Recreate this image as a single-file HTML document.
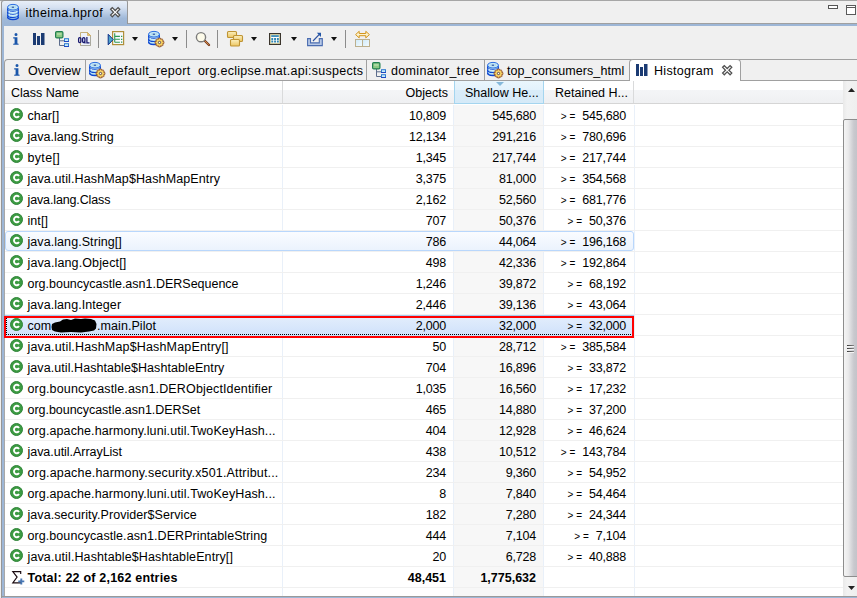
<!DOCTYPE html>
<html><head><meta charset="utf-8"><title>itheima.hprof</title>
<style>
*{box-sizing:border-box;margin:0;padding:0}
html,body{width:857px;height:598px;overflow:hidden;background:#f0f0f0}
body{font-family:"Liberation Sans",sans-serif;font-size:12.5px;color:#000;position:relative;letter-spacing:.07px}
.abs{position:absolute}
svg{position:absolute;overflow:visible}
#etab{left:1px;top:0;width:127px;height:24px;background:linear-gradient(#e8eff8 0,#d6e1f1 28%,#b6cae4 55%,#a0b9d9 75%,#9db6d6 100%);border:1px solid #979797;border-bottom:none;border-radius:3px 2px 0 0}
#etab span{position:absolute;left:23.500px;top:5px;white-space:nowrap;letter-spacing:.42px}
#itabs{left:4px;top:59px;width:853px;height:22px;border-top:1px solid #a0a0a0;border-bottom:1px solid #a0a0a0;border-left:1px solid #a0a0a0;border-radius:4px 0 0 0;background:#f0f0f0}
.it{position:absolute;top:0;height:20px;border-right:1px solid #a0a0a0;white-space:nowrap}
.it span{position:absolute;top:4px}
#table{left:5px;top:81px;width:838px;height:515px;background:#fff;overflow:hidden}
#hdr{left:0;top:0;width:838px;height:23px;background:linear-gradient(#fff 0,#fff 39%,#f4f5f7 40%,#eff0f2 100%);border-bottom:1px solid #d5d5d5}
.hc{position:absolute;top:0;height:22px;border-right:1px solid #d9dadb;white-space:nowrap}
.hc span{position:absolute;top:5px;letter-spacing:0}
.row{position:absolute;left:5px;width:838px;height:21px;border-bottom:1px solid #f0f0f0;white-space:nowrap}
.row span{position:absolute;top:4px}
.nm{left:22.500px}
.c1{right:397px;letter-spacing:-.2px}.c2{right:307px;letter-spacing:-.2px}.c3{right:217px;letter-spacing:-.2px}
.ge{position:static!important;font-size:10px;letter-spacing:3px!important;margin-right:.5px}
.ci{left:5px;top:3px}
.vl{position:absolute;top:105px;width:1px;height:491px;background:#e9f0f9}
.hov:before{content:"";box-sizing:border-box;position:absolute;left:0;top:0;width:629px;height:20px;border:1px solid #b9d7fc;border-radius:3px;background:linear-gradient(#fafcff,#ebf3fd)}
.sel:before{content:"";box-sizing:border-box;position:absolute;left:0;top:0;width:629px;height:21px;border-top:1px solid #a8c8ee;background:linear-gradient(#e3eefc,#cfe1fb)}
.sel:after{content:"";box-sizing:border-box;position:absolute;left:1px;top:1px;width:627px;height:19px;border:1px dotted #000}
.blot{left:46px;top:3px}
.dd{position:absolute;top:11px;width:0;height:0;margin-left:.2px;border-left:3.700px solid transparent;border-right:3.700px solid transparent;border-top:4px solid #111}
.sep{position:absolute;top:4px;width:1px;height:18px;background:#8c8c8c}
</style></head><body>
<div class="abs" style="left:0;top:0;width:857px;height:1px;background:#a6a6a6"></div>
<div class="abs" style="left:1px;top:2px;width:1px;height:596px;background:#969696"></div>
<div class="abs" style="left:2px;top:24px;width:2px;height:574px;background:#9db6d6"></div>
<div class="abs" style="left:128px;top:23px;width:729px;height:1px;background:#a0a0a0"></div>
<div class="abs" style="left:2px;top:24px;width:855px;height:2px;background:#9db6d6"></div>
<div class="abs" id="etab">
<svg style="left:5px;top:3px" width="12" height="16" viewBox="0 0 12 16"><path d="M.6 3.200V13.0a5.400 2.500 0 0 0 10.800 0V3.200z" fill="#b9e3f2" stroke="#1d5cdc" stroke-width="1"/><path d="M.6 5.0a5.400 2.500 0 0 0 10.800 0" fill="none" stroke="#0f45cf" stroke-width="1.200"/><path d="M1.600 3.8a4.600 2.100 0 0 0 8.800 0" fill="none" stroke="#dff4fa" stroke-width=".9"/><path d="M.6 8.0a5.400 2.500 0 0 0 10.800 0" fill="none" stroke="#0f45cf" stroke-width="1.200"/><path d="M1.600 6.8a4.600 2.100 0 0 0 8.800 0" fill="none" stroke="#dff4fa" stroke-width=".9"/><path d="M.6 11.0a5.400 2.500 0 0 0 10.800 0" fill="none" stroke="#0f45cf" stroke-width="1.200"/><path d="M1.600 9.8a4.600 2.100 0 0 0 8.800 0" fill="none" stroke="#dff4fa" stroke-width=".9"/><path d="M.6 13.0a5.400 2.500 0 0 0 10.800 0" fill="none" stroke="#0f45cf" stroke-width="1.300"/><ellipse cx="6" cy="3.200" rx="5.400" ry="2.800" fill="#c9eaf5" stroke="#2367e0" stroke-width=".95"/><ellipse cx="6" cy="3.200" rx="3.400" ry="1.400" fill="#b3dcf0"/><rect x="4.800" y="2.700" width="2.200" height="1" fill="#1f3f96"/></svg>
<span>itheima.hprof</span>
<svg style="left:108px;top:6px" width="10.400" height="10.400" viewBox="0 0 10.400 10.400"><path d="M.6 2.300L2.300 .6 5.200 3.500 8.100 .6l1.700 1.700-2.900 2.900 2.900 2.900-1.700 1.700-2.900-2.900-2.900 2.900L.6 8.100l2.900-2.900z" fill="#fff" stroke="#505050" stroke-width="1.250" stroke-linejoin="miter"/></svg>
</div>
<div class="abs" style="left:828px;top:5px;width:10px;height:4px;border:1px solid #555;background:#fff"></div>
<div class="abs" style="left:846px;top:5px;width:10px;height:10px;border:1px solid #5a5a5a;background:#fff"></div><div class="abs" style="left:846px;top:7px;width:10px;height:1px;background:#5a5a5a"></div>
<div class="abs" id="tb" style="left:0;top:26px;width:857px;height:33px">
<svg style="left:12.500px;top:7px" width="6" height="12" viewBox="0 0 6 12"><path d="M1.500 1.500a1.500 1.500 0 1 1 3 0a1.500 1.500 0 1 1-3 0zM.2 4.300h4.200v6.200l1.200.2v1.100H.2v-1.100l1.400-.2V5.600L.2 5.400z" fill="#1a56aa"/></svg>
<svg style="left:33px;top:7px" width="12" height="13" viewBox="0 0 12 13"><path d="M0 0h3v12h-3zM4 3h3v9h-3zM8 0h3.500v12h-3.500z" fill="#1b3b73"/></svg>
<svg style="left:55px;top:5px" width="15" height="16" viewBox="0 0 15 16"><path d="M4.500 7v7.500h5M4.500 9.800h5" fill="none" stroke="#5d6d8c" stroke-width="1"/><rect x=".6" y=".6" width="7.300" height="6.300" rx="1.200" fill="#8cc983" stroke="#1f7f4f" stroke-width="1.200"/><rect x="2" y="2" width="4.500" height="2" fill="#a9d8a0"/><rect x="9.500" y="7.700" width="4" height="2.800" fill="#c8ecfa" stroke="#2e7bd0"/><rect x="9.500" y="12.700" width="4" height="2.800" fill="#c8ecfa" stroke="#2e7bd0"/><path d="M9 10.500h5M9 15.500h5" stroke="#2048c0" stroke-width="1"/></svg>
<svg style="left:77px;top:6px" width="15" height="14" viewBox="0 0 15 14"><path d="M3.500 .5h7l3 3v10h-10z" fill="#eef2fb" stroke="#c4b07c"/><path d="M3.500 13.500h10v-9" fill="none" stroke="#a9a9a0"/><path d="M10.500 .5v3h3z" fill="#e9c672" stroke="#c9a04a" stroke-width=".6"/><g fill="none" stroke="#17176f" stroke-width="1.250"><rect x="1.600" y="5.600" width="2.300" height="5" rx="1.100"/><rect x="5.600" y="5.600" width="2.300" height="5" rx="1.100"/><path d="M6.800 9.500l1.600 1.800M9.900 5v5.800h2.600"/></g></svg>
<div class="sep" style="left:98px"></div>
<svg style="left:107px;top:5px" width="18" height="15" viewBox="0 0 18 15"><rect x="5.600" y=".6" width="11" height="13" fill="#f6f9fd" stroke="#b08f3a" stroke-width="1.200"/><path d="M7.700 2.300v8.900M7.700 5.400h5.200M7.700 8.300h5.200M7.700 11.200h5.200" stroke="#2f9a55" stroke-width="1.100" fill="none"/><path d="M14 5.400h1.300M14 8.300h1.300M14 11.200h1.300" stroke="#2f9a55" stroke-width="1.200"/><path d="M1.200 3.300l5 5.200-5 5.300z" fill="#4ea5cc" stroke="#0b2f88" stroke-width="1" stroke-linejoin="round"/></svg>
<div class="dd" style="left:132px"></div>
<svg style="left:148px;top:5px" width="16" height="16" viewBox="0 0 16 16"><path d="M.6 3.200V11.0a5.400 2.500 0 0 0 10.800 0V3.200z" fill="#b9e3f2" stroke="#1d5cdc" stroke-width="1"/><path d="M.6 5.0a5.400 2.500 0 0 0 10.800 0" fill="none" stroke="#0f45cf" stroke-width="1.200"/><path d="M1.600 3.8a4.600 2.100 0 0 0 8.800 0" fill="none" stroke="#dff4fa" stroke-width=".9"/><path d="M.6 8.0a5.400 2.500 0 0 0 10.800 0" fill="none" stroke="#0f45cf" stroke-width="1.200"/><path d="M1.600 6.8a4.600 2.100 0 0 0 8.800 0" fill="none" stroke="#dff4fa" stroke-width=".9"/><path d="M.6 11.0a5.400 2.500 0 0 0 10.800 0" fill="none" stroke="#0f45cf" stroke-width="1.300"/><ellipse cx="6" cy="3.200" rx="5.400" ry="2.800" fill="#c9eaf5" stroke="#2367e0" stroke-width=".95"/><ellipse cx="6" cy="3.200" rx="3.400" ry="1.400" fill="#b3dcf0"/><rect x="4.800" y="2.700" width="2.200" height="1" fill="#1f3f96"/><g transform="translate(7,7)"><path d="M3.61 0.09L5.39 0.09L5.72 1.44L5.80 1.47L6.99 0.75L8.25 2.01L7.53 3.20L7.56 3.28L8.91 3.61L8.91 5.39L7.56 5.72L7.53 5.80L8.25 6.99L6.99 8.25L5.80 7.53L5.72 7.56L5.39 8.91L3.61 8.91L3.28 7.56L3.20 7.53L2.01 8.25L0.75 6.99L1.47 5.80L1.44 5.72L0.09 5.39L0.09 3.61L1.44 3.28L1.47 3.20L0.75 2.01L2.01 0.75L3.20 1.47L3.28 1.44z" fill="#fbd55c" stroke="#8f5030" stroke-width=".9" stroke-linejoin="round"/><circle cx="4.500" cy="4.500" r="1.900" fill="#fde9a0"/><circle cx="4.500" cy="4.500" r="1.200" fill="#fff" stroke="#4a3020" stroke-width=".9"/></g></svg>
<div class="dd" style="left:172px"></div>
<div class="sep" style="left:186px"></div>
<svg style="left:195px;top:5px" width="16" height="16" viewBox="0 0 16 16"><path d="M9.500 9.500l4.500 4.500" stroke="#7a3c1c" stroke-width="2.400" stroke-linecap="round"/><path d="M10 10l3.500 3.500" stroke="#d08a4a" stroke-width="1" stroke-linecap="round"/><circle cx="6" cy="6.200" r="4.600" fill="#fdfbea" stroke="#7c7c7c" stroke-width="1.400"/></svg>
<div class="sep" style="left:217px"></div>
<svg style="left:227px;top:5px" width="16" height="16" viewBox="0 0 16 16"><defs><linearGradient id="yg" x1="0" y1="0" x2="0" y2="1"><stop offset="0" stop-color="#fbf0c0"/><stop offset="1" stop-color="#ecc661"/></linearGradient></defs><g fill="url(#yg)" stroke="#bf9434" stroke-width="1.100"><rect x=".5" y=".5" width="9" height="6" rx="1"/><rect x="6.500" y="4.500" width="9" height="6" rx="1"/><rect x="3.500" y="8.500" width="9" height="6.500" rx="1"/></g></svg>
<div class="dd" style="left:251px"></div>
<svg style="left:269px;top:7px" width="12" height="12" viewBox="0 0 12 12"><rect x=".6" y=".6" width="10.800" height="10.800" fill="#fff" stroke="#3a342c" stroke-width="1.200"/><rect x="1.600" y="1.600" width="8.800" height="8.800" fill="none" stroke="#cdc795" stroke-width=".9"/><rect x="2.200" y="2.200" width="7.600" height="1.700" fill="#2f86b2"/><path d="M2.300 6h7.500M2.300 8.500h7.500" stroke="#2f86b2" stroke-width="1.900" stroke-dasharray="1.900 .9"/></svg>
<div class="dd" style="left:291px"></div>
<svg style="left:307px;top:6px" width="17" height="15" viewBox="0 0 17 15"><path d="M.6 6.600h2.900v4.300h8.800V6.600h3v7H.6z" fill="#b7c8e6" stroke="#4a6cb0" stroke-width="1.100"/><path d="M6 9l6.800-7.200" stroke="#2a50a0" stroke-width="1.100"/><path d="M9.800 .7h4.200v4.200z" fill="#2456a6"/></svg>
<div class="dd" style="left:331px"></div>
<div class="sep" style="left:345px"></div>
<svg style="left:355px;top:5px" width="16" height="16" viewBox="0 0 16 16"><path d="M.6 3.600l3.600-3.300v2.200h6.600V.3l3.600 3.300-3.600 3.300V4.700H4.200v2.200z" fill="#fdf3cf" stroke="#d3961c" stroke-width="1"/><defs><linearGradient id="bg2" x1="0" y1="0" x2="1" y2="1"><stop offset="0" stop-color="#cfeaf8"/><stop offset="1" stop-color="#f4fbfe"/></linearGradient></defs><rect x=".5" y="8.500" width="7" height="7" fill="url(#bg2)" stroke="#bcb08e"/><rect x="7.500" y="8.500" width="7" height="7" fill="url(#bg2)" stroke="#bcb08e"/></svg>
</div>
<div class="abs" id="itabs">
<div class="it" style="left:0;width:81px"><svg style="left:8.500px;top:4px" width="6" height="12" viewBox="0 0 6 12"><path d="M1.500 1.500a1.500 1.500 0 1 1 3 0a1.500 1.500 0 1 1-3 0zM.2 4.300h4.200v6.200l1.200.2v1.100H.2v-1.100l1.400-.2V5.600L.2 5.400z" fill="#1a56aa"/></svg><span style="left:23px">Overview</span></div>
<div class="it" style="left:81px;width:281px"><svg style="left:3px;top:2px" width="16" height="16" viewBox="0 0 16 16"><path d="M.6 3.200V11.0a5.400 2.500 0 0 0 10.800 0V3.200z" fill="#b9e3f2" stroke="#1d5cdc" stroke-width="1"/><path d="M.6 5.0a5.400 2.500 0 0 0 10.800 0" fill="none" stroke="#0f45cf" stroke-width="1.200"/><path d="M1.600 3.8a4.600 2.100 0 0 0 8.800 0" fill="none" stroke="#dff4fa" stroke-width=".9"/><path d="M.6 8.0a5.400 2.500 0 0 0 10.800 0" fill="none" stroke="#0f45cf" stroke-width="1.200"/><path d="M1.600 6.8a4.600 2.100 0 0 0 8.800 0" fill="none" stroke="#dff4fa" stroke-width=".9"/><path d="M.6 11.0a5.400 2.500 0 0 0 10.800 0" fill="none" stroke="#0f45cf" stroke-width="1.300"/><ellipse cx="6" cy="3.200" rx="5.400" ry="2.800" fill="#c9eaf5" stroke="#2367e0" stroke-width=".95"/><ellipse cx="6" cy="3.200" rx="3.400" ry="1.400" fill="#b3dcf0"/><rect x="4.800" y="2.700" width="2.200" height="1" fill="#1f3f96"/><g transform="translate(7,7)"><path d="M3.61 0.09L5.39 0.09L5.72 1.44L5.80 1.47L6.99 0.75L8.25 2.01L7.53 3.20L7.56 3.28L8.91 3.61L8.91 5.39L7.56 5.72L7.53 5.80L8.25 6.99L6.99 8.25L5.80 7.53L5.72 7.56L5.39 8.91L3.61 8.91L3.28 7.56L3.20 7.53L2.01 8.25L0.75 6.99L1.47 5.80L1.44 5.72L0.09 5.39L0.09 3.61L1.44 3.28L1.47 3.20L0.75 2.01L2.01 0.75L3.20 1.47L3.28 1.44z" fill="#fbd55c" stroke="#8f5030" stroke-width=".9" stroke-linejoin="round"/><circle cx="4.500" cy="4.500" r="1.900" fill="#fde9a0"/><circle cx="4.500" cy="4.500" r="1.200" fill="#fff" stroke="#4a3020" stroke-width=".9"/></g></svg><span style="left:23.500px;letter-spacing:.27px">default_report&nbsp; org.eclipse.mat.api:suspects</span></div>
<div class="it" style="left:362px;width:118px"><svg style="left:5px;top:2px" width="15" height="16" viewBox="0 0 15 16"><path d="M4.500 7v7.500h5M4.500 9.800h5" fill="none" stroke="#5d6d8c" stroke-width="1"/><rect x=".6" y=".6" width="7.300" height="6.300" rx="1.200" fill="#8cc983" stroke="#1f7f4f" stroke-width="1.200"/><rect x="2" y="2" width="4.500" height="2" fill="#a9d8a0"/><rect x="9.500" y="7.700" width="4" height="2.800" fill="#c8ecfa" stroke="#2e7bd0"/><rect x="9.500" y="12.700" width="4" height="2.800" fill="#c8ecfa" stroke="#2e7bd0"/><path d="M9 10.500h5M9 15.500h5" stroke="#2048c0" stroke-width="1"/></svg><span style="left:24px;letter-spacing:.33px">dominator_tree</span></div>
<div class="it" style="left:480px;width:146px"><svg style="left:2px;top:2px" width="16" height="16" viewBox="0 0 16 16"><path d="M.6 3.200V11.0a5.400 2.500 0 0 0 10.800 0V3.200z" fill="#b9e3f2" stroke="#1d5cdc" stroke-width="1"/><path d="M.6 5.0a5.400 2.500 0 0 0 10.800 0" fill="none" stroke="#0f45cf" stroke-width="1.200"/><path d="M1.600 3.8a4.600 2.100 0 0 0 8.800 0" fill="none" stroke="#dff4fa" stroke-width=".9"/><path d="M.6 8.0a5.400 2.500 0 0 0 10.800 0" fill="none" stroke="#0f45cf" stroke-width="1.200"/><path d="M1.600 6.8a4.600 2.100 0 0 0 8.800 0" fill="none" stroke="#dff4fa" stroke-width=".9"/><path d="M.6 11.0a5.400 2.500 0 0 0 10.800 0" fill="none" stroke="#0f45cf" stroke-width="1.300"/><ellipse cx="6" cy="3.200" rx="5.400" ry="2.800" fill="#c9eaf5" stroke="#2367e0" stroke-width=".95"/><ellipse cx="6" cy="3.200" rx="3.400" ry="1.400" fill="#b3dcf0"/><rect x="4.800" y="2.700" width="2.200" height="1" fill="#1f3f96"/><g transform="translate(7,7)"><path d="M3.61 0.09L5.39 0.09L5.72 1.44L5.80 1.47L6.99 0.75L8.25 2.01L7.53 3.20L7.56 3.28L8.91 3.61L8.91 5.39L7.56 5.72L7.53 5.80L8.25 6.99L6.99 8.25L5.80 7.53L5.72 7.56L5.39 8.91L3.61 8.91L3.28 7.56L3.20 7.53L2.01 8.25L0.75 6.99L1.47 5.80L1.44 5.72L0.09 5.39L0.09 3.61L1.44 3.28L1.47 3.20L0.75 2.01L2.01 0.75L3.20 1.47L3.28 1.44z" fill="#fbd55c" stroke="#8f5030" stroke-width=".9" stroke-linejoin="round"/><circle cx="4.500" cy="4.500" r="1.900" fill="#fde9a0"/><circle cx="4.500" cy="4.500" r="1.200" fill="#fff" stroke="#4a3020" stroke-width=".9"/></g></svg><span style="left:22px">top_consumers_html</span></div>
<div class="it" style="left:624px;width:112px;height:22px;background:#fff;border-left:1px solid #a0a0a0;top:-1px;border-top:1px solid #a0a0a0;border-radius:4px 4px 0 0"><svg style="left:6px;top:4px" width="12" height="13" viewBox="0 0 12 13"><path d="M0 0h3v12h-3zM4 3h3v9h-3zM8 0h3.500v12h-3.500z" fill="#1b3b73"/></svg><span style="left:24px;top:4px;letter-spacing:.3px">Histogram</span>
<svg style="left:92px;top:5px" width="10.400" height="10.400" viewBox="0 0 10.400 10.400"><path d="M.6 2.300L2.300 .6 5.200 3.500 8.100 .6l1.700 1.700-2.900 2.900 2.900 2.900-1.700 1.700-2.900-2.900-2.900 2.900L.6 8.100l2.900-2.900z" fill="#fff" stroke="#505050" stroke-width="1.250" stroke-linejoin="miter"/></svg>
</div>
</div>
<div class="abs" style="left:4px;top:81px;width:1px;height:515px;background:#a8a8a8"></div>
<div class="abs" id="table">
<div class="abs" id="hdr">
<div class="hc" style="left:0;width:278px"><span style="left:6px">Class Name</span></div>
<div class="hc" style="left:278px;width:171px;border-right:none"><span style="right:6px">Objects</span></div>
<div class="hc" style="left:449px;width:90px;height:23px;background:linear-gradient(#eaf6fd 0,#e3f2fc 39%,#d9ecf9 40%,#d5eaf8 100%);border:1px solid #a4d5ef;border-top:none"><span style="left:10px;top:5px">Shallow He...</span><svg style="left:41px;top:1px" width="8" height="4" viewBox="0 0 8 4"><path d="M0 0h8l-4 4z" fill="#86b9db"/></svg></div>
<div class="hc" style="left:539px;width:90px"><span style="left:11px">Retained H...</span></div>
</div>
</div>
<div class="abs" style="left:454px;top:105px;width:89px;height:491px;background:#f7f7f7"></div>
<div class="vl" style="left:282px"></div><div class="vl" style="left:453px"></div><div class="vl" style="left:543px"></div><div class="vl" style="left:634px"></div>
<div class="row" style="top:105px"><svg class="ci" width="13" height="13" viewBox="0 0 13 13"><circle cx="6.5" cy="6.5" r="6" fill="#3c9b42" stroke="#2f8438" stroke-width="1"/><path d="M9 5A2.700 2.800 0 1 0 9 8" fill="none" stroke="#fff" stroke-width="1.900"/></svg><span class="nm">char[]</span><span class="c1">10,809</span><span class="c2">545,680</span><span class="c3"><span class="ge">&gt;=</span> 545,680</span></div>
<div class="row" style="top:126px"><svg class="ci" width="13" height="13" viewBox="0 0 13 13"><circle cx="6.5" cy="6.5" r="6" fill="#3c9b42" stroke="#2f8438" stroke-width="1"/><path d="M9 5A2.700 2.800 0 1 0 9 8" fill="none" stroke="#fff" stroke-width="1.900"/></svg><span class="nm" style="letter-spacing:0.008px">java.lang.String</span><span class="c1">12,134</span><span class="c2">291,216</span><span class="c3"><span class="ge">&gt;=</span> 780,696</span></div>
<div class="row" style="top:147px"><svg class="ci" width="13" height="13" viewBox="0 0 13 13"><circle cx="6.5" cy="6.5" r="6" fill="#3c9b42" stroke="#2f8438" stroke-width="1"/><path d="M9 5A2.700 2.800 0 1 0 9 8" fill="none" stroke="#fff" stroke-width="1.900"/></svg><span class="nm" style="letter-spacing:0.320px">byte[]</span><span class="c1">1,345</span><span class="c2">217,744</span><span class="c3"><span class="ge">&gt;=</span> 217,744</span></div>
<div class="row" style="top:168px"><svg class="ci" width="13" height="13" viewBox="0 0 13 13"><circle cx="6.5" cy="6.5" r="6" fill="#3c9b42" stroke="#2f8438" stroke-width="1"/><path d="M9 5A2.700 2.800 0 1 0 9 8" fill="none" stroke="#fff" stroke-width="1.900"/></svg><span class="nm" style="letter-spacing:0.120px">java.util.HashMap&#36;HashMapEntry</span><span class="c1">3,375</span><span class="c2">81,000</span><span class="c3"><span class="ge">&gt;=</span> 354,568</span></div>
<div class="row" style="top:189px"><svg class="ci" width="13" height="13" viewBox="0 0 13 13"><circle cx="6.5" cy="6.5" r="6" fill="#3c9b42" stroke="#2f8438" stroke-width="1"/><path d="M9 5A2.700 2.800 0 1 0 9 8" fill="none" stroke="#fff" stroke-width="1.900"/></svg><span class="nm" style="letter-spacing:-0.130px">java.lang.Class</span><span class="c1">2,162</span><span class="c2">52,560</span><span class="c3"><span class="ge">&gt;=</span> 681,776</span></div>
<div class="row" style="top:210px"><svg class="ci" width="13" height="13" viewBox="0 0 13 13"><circle cx="6.5" cy="6.5" r="6" fill="#3c9b42" stroke="#2f8438" stroke-width="1"/><path d="M9 5A2.700 2.800 0 1 0 9 8" fill="none" stroke="#fff" stroke-width="1.900"/></svg><span class="nm">int[]</span><span class="c1">707</span><span class="c2">50,376</span><span class="c3"><span class="ge">&gt;=</span> 50,376</span></div>
<div class="row hov" style="top:231px"><svg class="ci" width="13" height="13" viewBox="0 0 13 13"><circle cx="6.5" cy="6.5" r="6" fill="#3c9b42" stroke="#2f8438" stroke-width="1"/><path d="M9 5A2.700 2.800 0 1 0 9 8" fill="none" stroke="#fff" stroke-width="1.900"/></svg><span class="nm">java.lang.String[]</span><span class="c1">786</span><span class="c2">44,064</span><span class="c3"><span class="ge">&gt;=</span> 196,168</span></div>
<div class="row" style="top:252px"><svg class="ci" width="13" height="13" viewBox="0 0 13 13"><circle cx="6.5" cy="6.5" r="6" fill="#3c9b42" stroke="#2f8438" stroke-width="1"/><path d="M9 5A2.700 2.800 0 1 0 9 8" fill="none" stroke="#fff" stroke-width="1.900"/></svg><span class="nm" style="letter-spacing:0.126px">java.lang.Object[]</span><span class="c1">498</span><span class="c2">42,336</span><span class="c3"><span class="ge">&gt;=</span> 192,864</span></div>
<div class="row" style="top:273px"><svg class="ci" width="13" height="13" viewBox="0 0 13 13"><circle cx="6.5" cy="6.5" r="6" fill="#3c9b42" stroke="#2f8438" stroke-width="1"/><path d="M9 5A2.700 2.800 0 1 0 9 8" fill="none" stroke="#fff" stroke-width="1.900"/></svg><span class="nm" style="letter-spacing:-0.006px">org.bouncycastle.asn1.DERSequence</span><span class="c1">1,246</span><span class="c2">39,872</span><span class="c3"><span class="ge">&gt;=</span> 68,192</span></div>
<div class="row" style="top:294px"><svg class="ci" width="13" height="13" viewBox="0 0 13 13"><circle cx="6.5" cy="6.5" r="6" fill="#3c9b42" stroke="#2f8438" stroke-width="1"/><path d="M9 5A2.700 2.800 0 1 0 9 8" fill="none" stroke="#fff" stroke-width="1.900"/></svg><span class="nm">java.lang.Integer</span><span class="c1">2,446</span><span class="c2">39,136</span><span class="c3"><span class="ge">&gt;=</span> 43,064</span></div>
<div class="row sel" style="top:315px"><svg class="ci" width="13" height="13" viewBox="0 0 13 13"><circle cx="6.5" cy="6.5" r="6" fill="#3c9b42" stroke="#2f8438" stroke-width="1"/><path d="M9 5A2.700 2.800 0 1 0 9 8" fill="none" stroke="#fff" stroke-width="1.900"/></svg><span class="nm">com</span><span class="nm" style="left:92px">.main.Pilot</span><svg class="blot" width="46" height="15" viewBox="0 0 46 15"><path d="M.5 9L1 6l3-1.500 5-1 3-2 4-.5 4 1 4-1.500 6 .5 4-.5 6 .5 4 1.500 1.500 3.500-.5 4.500-2 2-5 1-8 1-10-.5-10 .5-6-1-3-1.500z" fill="#000"/></svg><span class="c1">2,000</span><span class="c2">32,000</span><span class="c3"><span class="ge">&gt;=</span> 32,000</span></div>
<div class="row" style="top:336px"><svg class="ci" width="13" height="13" viewBox="0 0 13 13"><circle cx="6.5" cy="6.5" r="6" fill="#3c9b42" stroke="#2f8438" stroke-width="1"/><path d="M9 5A2.700 2.800 0 1 0 9 8" fill="none" stroke="#fff" stroke-width="1.900"/></svg><span class="nm" style="letter-spacing:0.164px">java.util.HashMap&#36;HashMapEntry[]</span><span class="c1">50</span><span class="c2">28,712</span><span class="c3"><span class="ge">&gt;=</span> 385,584</span></div>
<div class="row" style="top:357px"><svg class="ci" width="13" height="13" viewBox="0 0 13 13"><circle cx="6.5" cy="6.5" r="6" fill="#3c9b42" stroke="#2f8438" stroke-width="1"/><path d="M9 5A2.700 2.800 0 1 0 9 8" fill="none" stroke="#fff" stroke-width="1.900"/></svg><span class="nm">java.util.Hashtable&#36;HashtableEntry</span><span class="c1">704</span><span class="c2">16,896</span><span class="c3"><span class="ge">&gt;=</span> 33,872</span></div>
<div class="row" style="top:378px"><svg class="ci" width="13" height="13" viewBox="0 0 13 13"><circle cx="6.5" cy="6.5" r="6" fill="#3c9b42" stroke="#2f8438" stroke-width="1"/><path d="M9 5A2.700 2.800 0 1 0 9 8" fill="none" stroke="#fff" stroke-width="1.900"/></svg><span class="nm" style="letter-spacing:0.143px">org.bouncycastle.asn1.DERObjectIdentifier</span><span class="c1">1,035</span><span class="c2">16,560</span><span class="c3"><span class="ge">&gt;=</span> 17,232</span></div>
<div class="row" style="top:399px"><svg class="ci" width="13" height="13" viewBox="0 0 13 13"><circle cx="6.5" cy="6.5" r="6" fill="#3c9b42" stroke="#2f8438" stroke-width="1"/><path d="M9 5A2.700 2.800 0 1 0 9 8" fill="none" stroke="#fff" stroke-width="1.900"/></svg><span class="nm" style="letter-spacing:-0.037px">org.bouncycastle.asn1.DERSet</span><span class="c1">465</span><span class="c2">14,880</span><span class="c3"><span class="ge">&gt;=</span> 37,200</span></div>
<div class="row" style="top:420px"><svg class="ci" width="13" height="13" viewBox="0 0 13 13"><circle cx="6.5" cy="6.5" r="6" fill="#3c9b42" stroke="#2f8438" stroke-width="1"/><path d="M9 5A2.700 2.800 0 1 0 9 8" fill="none" stroke="#fff" stroke-width="1.900"/></svg><span class="nm" style="letter-spacing:0.106px">org.apache.harmony.luni.util.TwoKeyHash...</span><span class="c1">404</span><span class="c2">12,928</span><span class="c3"><span class="ge">&gt;=</span> 46,624</span></div>
<div class="row" style="top:441px"><svg class="ci" width="13" height="13" viewBox="0 0 13 13"><circle cx="6.5" cy="6.5" r="6" fill="#3c9b42" stroke="#2f8438" stroke-width="1"/><path d="M9 5A2.700 2.800 0 1 0 9 8" fill="none" stroke="#fff" stroke-width="1.900"/></svg><span class="nm" style="letter-spacing:-0.035px">java.util.ArrayList</span><span class="c1">438</span><span class="c2">10,512</span><span class="c3"><span class="ge">&gt;=</span> 143,784</span></div>
<div class="row" style="top:462px"><svg class="ci" width="13" height="13" viewBox="0 0 13 13"><circle cx="6.5" cy="6.5" r="6" fill="#3c9b42" stroke="#2f8438" stroke-width="1"/><path d="M9 5A2.700 2.800 0 1 0 9 8" fill="none" stroke="#fff" stroke-width="1.900"/></svg><span class="nm" style="letter-spacing:0.172px">org.apache.harmony.security.x501.Attribut...</span><span class="c1">234</span><span class="c2">9,360</span><span class="c3"><span class="ge">&gt;=</span> 54,952</span></div>
<div class="row" style="top:483px"><svg class="ci" width="13" height="13" viewBox="0 0 13 13"><circle cx="6.5" cy="6.5" r="6" fill="#3c9b42" stroke="#2f8438" stroke-width="1"/><path d="M9 5A2.700 2.800 0 1 0 9 8" fill="none" stroke="#fff" stroke-width="1.900"/></svg><span class="nm" style="letter-spacing:0.106px">org.apache.harmony.luni.util.TwoKeyHash...</span><span class="c1">8</span><span class="c2">7,840</span><span class="c3"><span class="ge">&gt;=</span> 54,464</span></div>
<div class="row" style="top:504px"><svg class="ci" width="13" height="13" viewBox="0 0 13 13"><circle cx="6.5" cy="6.5" r="6" fill="#3c9b42" stroke="#2f8438" stroke-width="1"/><path d="M9 5A2.700 2.800 0 1 0 9 8" fill="none" stroke="#fff" stroke-width="1.900"/></svg><span class="nm">java.security.Provider&#36;Service</span><span class="c1">182</span><span class="c2">7,280</span><span class="c3"><span class="ge">&gt;=</span> 24,344</span></div>
<div class="row" style="top:525px"><svg class="ci" width="13" height="13" viewBox="0 0 13 13"><circle cx="6.5" cy="6.5" r="6" fill="#3c9b42" stroke="#2f8438" stroke-width="1"/><path d="M9 5A2.700 2.800 0 1 0 9 8" fill="none" stroke="#fff" stroke-width="1.900"/></svg><span class="nm">org.bouncycastle.asn1.DERPrintableString</span><span class="c1">444</span><span class="c2">7,104</span><span class="c3"><span class="ge">&gt;=</span> 7,104</span></div>
<div class="row" style="top:546px"><svg class="ci" width="13" height="13" viewBox="0 0 13 13"><circle cx="6.5" cy="6.5" r="6" fill="#3c9b42" stroke="#2f8438" stroke-width="1"/><path d="M9 5A2.700 2.800 0 1 0 9 8" fill="none" stroke="#fff" stroke-width="1.900"/></svg><span class="nm" style="letter-spacing:0.112px">java.util.Hashtable&#36;HashtableEntry[]</span><span class="c1">20</span><span class="c2">6,728</span><span class="c3"><span class="ge">&gt;=</span> 40,888</span></div>
<div class="row" style="top:567px;font-weight:bold;letter-spacing:.2px"><span class="nm">Total: 22 of 2,162 entries</span><span class="c1" style="letter-spacing:0">48,451</span><span class="c2" style="letter-spacing:0">1,775,632</span>
<svg style="left:7px;top:4px" width="14" height="14" viewBox="0 0 14 14"><path d="M8.700 3V.6H.8l4.300 5.500L.8 11.800h8.200V9.600" fill="none" stroke="#1a0a10" stroke-width="1.150"/><path d="M9.300 7.400v6M6.300 10.400h6" stroke="#4878b4" stroke-width="1.900"/></svg></div>
<div class="abs" style="left:5px;top:315px;width:0;height:0"></div>
<div class="abs" style="left:4px;top:316px;width:630px;height:22px;border:2px solid #f00"></div>
<div class="abs" id="sb" style="left:843px;top:81px;width:14px;height:515px;background:linear-gradient(90deg,#e9e9e9,#f2f2f2 30%,#efefef)">
<svg style="left:5px;top:7px" width="7" height="4" viewBox="0 0 7 4"><path d="M0 4h7l-3.500-4z" fill="#222"/></svg>
<div class="abs" style="left:0;top:38px;width:16px;height:458px;border:1px solid #8d8d8d;border-radius:2px;background:linear-gradient(90deg,#f4f4f4 0,#eaeaeb 30%,#d9d9dc 50%,#c9c9ce 70%,#c2c2c8 100%)"></div>
<div class="abs" style="left:4px;top:264px;width:7px;height:1px;background:linear-gradient(90deg,#3a3a3a,#8a8a8a);box-shadow:0 1px 0 #f4f4f4"></div><div class="abs" style="left:4px;top:267px;width:7px;height:1px;background:linear-gradient(90deg,#3a3a3a,#8a8a8a);box-shadow:0 1px 0 #f4f4f4"></div><div class="abs" style="left:4px;top:270px;width:7px;height:1px;background:linear-gradient(90deg,#3a3a3a,#8a8a8a);box-shadow:0 1px 0 #f4f4f4"></div>
<svg style="left:5px;top:505px" width="7" height="4" viewBox="0 0 7 4"><path d="M0 0h7l-3.500 4z" fill="#222"/></svg>
</div>
<div class="abs" style="left:2px;top:596px;width:855px;height:1px;background:#9a9a9a"></div>
<div class="abs" style="left:2px;top:597px;width:855px;height:1px;background:#9db6d6"></div>
</body></html>
